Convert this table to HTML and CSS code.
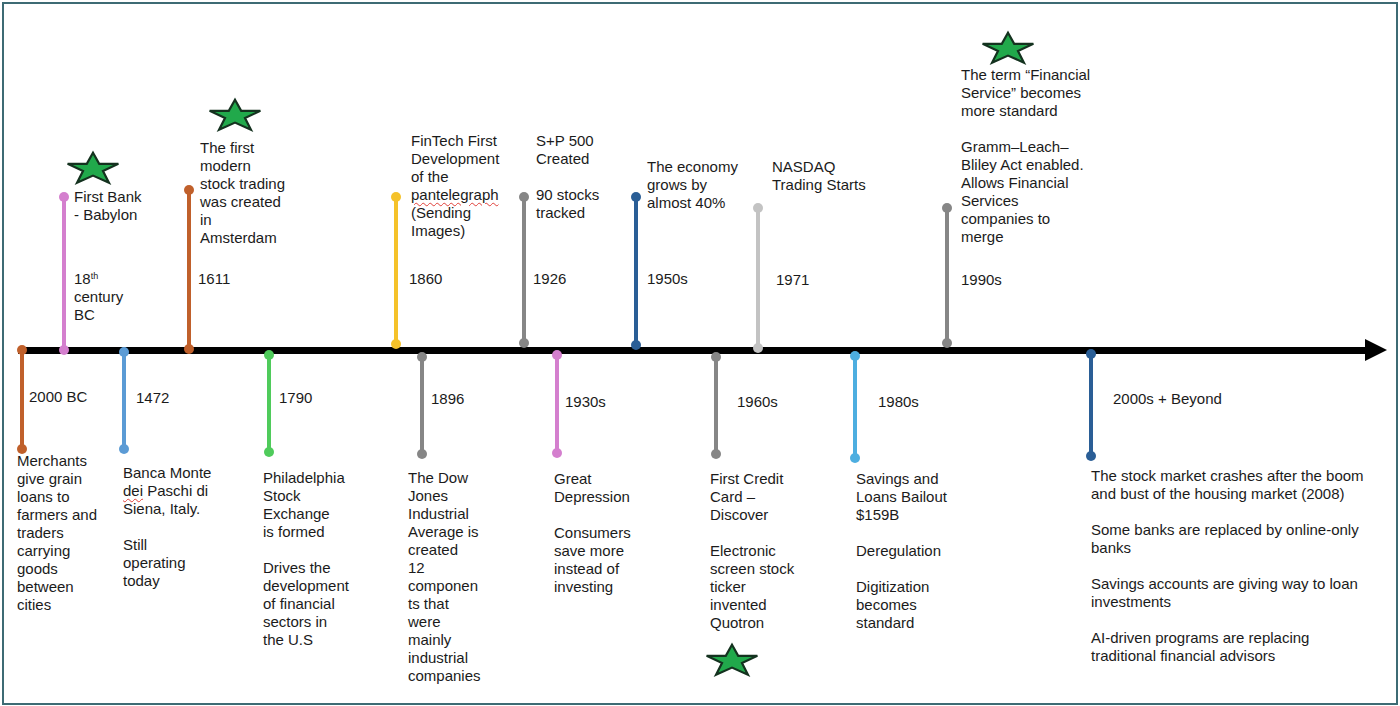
FILE: index.html
```html
<!DOCTYPE html>
<html lang="en">
<head>
<meta charset="utf-8">
<title>Financial Services Timeline</title>
<link rel="stylesheet" href="styles.css">
</head>
<body>
<div class="frame">
  <div class="axis"></div>

  <!-- stems above the axis -->
  <div class="stem c-pink s1"></div>
  <div class="stem c-brown s2"></div>
  <div class="stem c-yellow s3"></div>
  <div class="stem c-gray s4"></div>
  <div class="stem c-navy s5"></div>
  <div class="stem c-silver s6"></div>
  <div class="stem c-gray s7"></div>

  <!-- stems below the axis -->
  <div class="stem c-brown s8"></div>
  <div class="stem c-blue s9"></div>
  <div class="stem c-green s10"></div>
  <div class="stem c-gray s11"></div>
  <div class="stem c-pink s12"></div>
  <div class="stem c-gray s13"></div>
  <div class="stem c-sky s14"></div>
  <div class="stem c-navy s15"></div>

  <!-- stars -->
  <svg class="star st1" viewBox="0 0 100 95" preserveAspectRatio="none"><polygon points="50,2 61.5,35 97,35 68.5,56.5 79.5,91 50,70 20.5,91 31.5,56.5 3,35 38.5,35"/></svg>
  <svg class="star st2" viewBox="0 0 100 95" preserveAspectRatio="none"><polygon points="50,2 61.5,35 97,35 68.5,56.5 79.5,91 50,70 20.5,91 31.5,56.5 3,35 38.5,35"/></svg>
  <svg class="star st3" viewBox="0 0 100 95" preserveAspectRatio="none"><polygon points="50,2 61.5,35 97,35 68.5,56.5 79.5,91 50,70 20.5,91 31.5,56.5 3,35 38.5,35"/></svg>
  <svg class="star st4" viewBox="0 0 100 95" preserveAspectRatio="none"><polygon points="50,2 61.5,35 97,35 68.5,56.5 79.5,91 50,70 20.5,91 31.5,56.5 3,35 38.5,35"/></svg>

  <!-- texts above -->
  <div class="t a1"><p>First Bank<br>- Babylon</p></div>
  <div class="t a1d"><p>18<sup>th</sup><br>century<br>BC</p></div>

  <div class="t a2"><p>The first<br>modern<br>stock trading<br>was created<br>in<br>Amsterdam</p></div>
  <div class="t a2d"><p>1611</p></div>

  <div class="t a3"><p>FinTech First<br>Development<br>of the<br><span class="spell">pantelegraph</span><br>(Sending<br>Images)</p></div>
  <div class="t a3d"><p>1860</p></div>

  <div class="t a4"><p>S+P 500<br>Created</p><p>90 stocks<br>tracked</p></div>
  <div class="t a4d"><p>1926</p></div>

  <div class="t a5"><p>The economy<br>grows by<br>almost 40%</p></div>
  <div class="t a5d"><p>1950s</p></div>

  <div class="t a6"><p>NASDAQ<br>Trading Starts</p></div>
  <div class="t a6d"><p>1971</p></div>

  <div class="t a7"><p>The term “Financial<br>Service” becomes<br>more standard</p><p>Gramm–Leach–<br>Bliley Act enabled.<br>Allows Financial<br>Services<br>companies to<br>merge</p></div>
  <div class="t a7d"><p>1990s</p></div>

  <!-- texts below -->
  <div class="t b1d"><p>2000 BC</p></div>
  <div class="t b1"><p>Merchants<br>give grain<br>loans to<br>farmers and<br>traders<br>carrying<br>goods<br>between<br>cities</p></div>

  <div class="t b2d"><p>1472</p></div>
  <div class="t b2"><p>Banca Monte<br><span class="spell">dei</span> Paschi di<br>Siena, Italy.</p><p>Still<br>operating<br>today</p></div>

  <div class="t b3d"><p>1790</p></div>
  <div class="t b3"><p>Philadelphia<br>Stock<br>Exchange<br>is formed</p><p>Drives the<br>development<br>of financial<br>sectors in<br>the U.S</p></div>

  <div class="t b4d"><p>1896</p></div>
  <div class="t b4"><p>The Dow<br>Jones<br>Industrial<br>Average is<br>created<br>12<br>componen<br>ts that<br>were<br>mainly<br>industrial<br>companies</p></div>

  <div class="t b5d"><p>1930s</p></div>
  <div class="t b5"><p>Great<br>Depression</p><p>Consumers<br>save more<br>instead of<br>investing</p></div>

  <div class="t b6d"><p>1960s</p></div>
  <div class="t b6"><p>First Credit<br>Card –<br>Discover</p><p>Electronic<br>screen stock<br>ticker<br>invented<br>Quotron</p></div>

  <div class="t b7d"><p>1980s</p></div>
  <div class="t b7"><p>Savings and<br>Loans Bailout<br>$159B</p><p>Deregulation</p><p>Digitization<br>becomes<br>standard</p></div>

  <div class="t b8d"><p>2000s + Beyond</p></div>
  <div class="t b8"><p>The stock market crashes after the boom<br>and bust of the housing market (2008)</p><p>Some banks are replaced by online-only<br>banks</p><p>Savings accounts are giving way to loan<br>investments</p><p>AI-driven programs are replacing<br>traditional financial advisors</p></div>
</div>
</body>
</html>
```

FILE: styles.css
```css
html, body {
  margin: 0;
  padding: 0;
  background: #ffffff;
}

.frame {
  position: relative;
  box-sizing: border-box;
  margin: 2px 0 0 2px;
  width: 1396px;
  height: 703px;
  border: 2px solid #3d6b74;
  background: #ffffff;
  overflow: hidden;
}

/* main arrow axis */
.axis {
  position: absolute;
  left: 14px;
  top: 343px;
  width: 1347px;
  height: 7px;
  background: #000000;
}
.axis::after {
  content: "";
  position: absolute;
  right: -22px;
  top: -8px;
  width: 0;
  height: 0;
  border-left: 22px solid #000000;
  border-top: 11.5px solid transparent;
  border-bottom: 11.5px solid transparent;
}

/* stems with dots at both ends */
.stem {
  position: absolute;
  width: 4px;
}
.stem::before,
.stem::after {
  content: "";
  position: absolute;
  left: -3px;
  width: 10px;
  height: 10px;
  border-radius: 50%;
  background: inherit;
}
.stem::before { top: -5px; }
.stem::after { bottom: -5px; }

.c-pink   { background: #d47fce; }
.c-brown  { background: #c0602b; }
.c-yellow { background: #f5c22a; }
.c-gray   { background: #868686; }
.c-navy   { background: #2a5e96; }
.c-silver { background: #c3c3c3; }
.c-blue   { background: #5b9bd5; }
.c-green  { background: #4fcb5b; }
.c-sky    { background: #4daee0; }

/* positions: left = x - 6, top = yTop - 4, height = yBottom - yTop */
.s1  { left: 58px;  top: 193px; height: 153px; }
.s2  { left: 183px; top: 186px; height: 159px; }
.s3  { left: 389.7px; top: 193px; height: 147px; }
.s4  { left: 517.7px; top: 193px; height: 146px; }
.s5  { left: 629.7px; top: 193px; height: 148px; }
.s6  { left: 751.7px; top: 204px; height: 140px; }
.s7  { left: 941.3px; top: 204px; height: 135px; }

.s8  { left: 15.5px;  top: 346px; height: 99px; }
.s9  { left: 118.3px; top: 348px; height: 97px; }
.s10 { left: 263.3px; top: 351px; height: 97px; }
.s11 { left: 416.3px; top: 353px; height: 97px; }
.s12 { left: 551.3px; top: 351px; height: 98px; }
.s13 { left: 710px;   top: 353px; height: 97px; }
.s14 { left: 849px;   top: 352px; height: 102px; }
.s15 { left: 1085px;  top: 350px; height: 102px; }

/* stars */
.star {
  position: absolute;
  width: 54px;
  height: 32px;
  overflow: visible;
}
.star polygon {
  fill: #21a94b;
  stroke: #14321f;
  stroke-width: 2.2px;
  stroke-linejoin: miter;
  vector-effect: non-scaling-stroke;
}
.st1 { left: 62px;  top: 148px; }
.st2 { left: 204px; top: 95px; }
.st3 { left: 977px; top: 28px; }
.st4 { left: 701px; top: 640px; }

/* text blocks */
.t {
  position: absolute;
  font-family: "Liberation Sans", Arial, sans-serif;
  font-size: 15px;
  line-height: 18px;
  color: #1b1b1b;
  white-space: nowrap;
}
.t p {
  margin: 0 0 18px 0;
}
.t p:last-child {
  margin-bottom: 0;
}
.t sup {
  font-size: 9px;
  line-height: 0;
  vertical-align: 5px;
}
.spell {
  text-decoration: underline wavy #e0403a;
  text-decoration-thickness: 1px;
  text-underline-offset: 2px;
}

.a1  { left: 70px;  top: 184px; }
.a1d { left: 70px;  top: 266px; }
.a2  { left: 196px; top: 135px; }
.a2d { left: 194px; top: 266px; }
.a3  { left: 407px; top: 128px; }
.a3d { left: 405px; top: 266px; }
.a4  { left: 532px; top: 128px; }
.a4d { left: 529px; top: 266px; }
.a5  { left: 643px; top: 154px; }
.a5d { left: 643px; top: 266px; }
.a6  { left: 768px; top: 154px; }
.a6d { left: 772px; top: 267px; }
.a7  { left: 957px; top: 62px; }
.a7d { left: 957px; top: 267px; }

.b1d { left: 25px;  top: 384px; }
.b1  { left: 13px;  top: 448px; }
.b2d { left: 132px; top: 385px; }
.b2  { left: 119px; top: 460px; }
.b3d { left: 275px; top: 385px; }
.b3  { left: 259px; top: 465px; }
.b4d { left: 427px; top: 386px; }
.b4  { left: 404px; top: 465px; }
.b5d { left: 561px; top: 389px; }
.b5  { left: 550px; top: 466px; }
.b6d { left: 733px; top: 389px; }
.b6  { left: 706px; top: 466px; }
.b7d { left: 874px; top: 389px; }
.b7  { left: 852px; top: 466px; }
.b8d { left: 1109px; top: 386px; }
.b8  { left: 1087px; top: 463px; }
```
